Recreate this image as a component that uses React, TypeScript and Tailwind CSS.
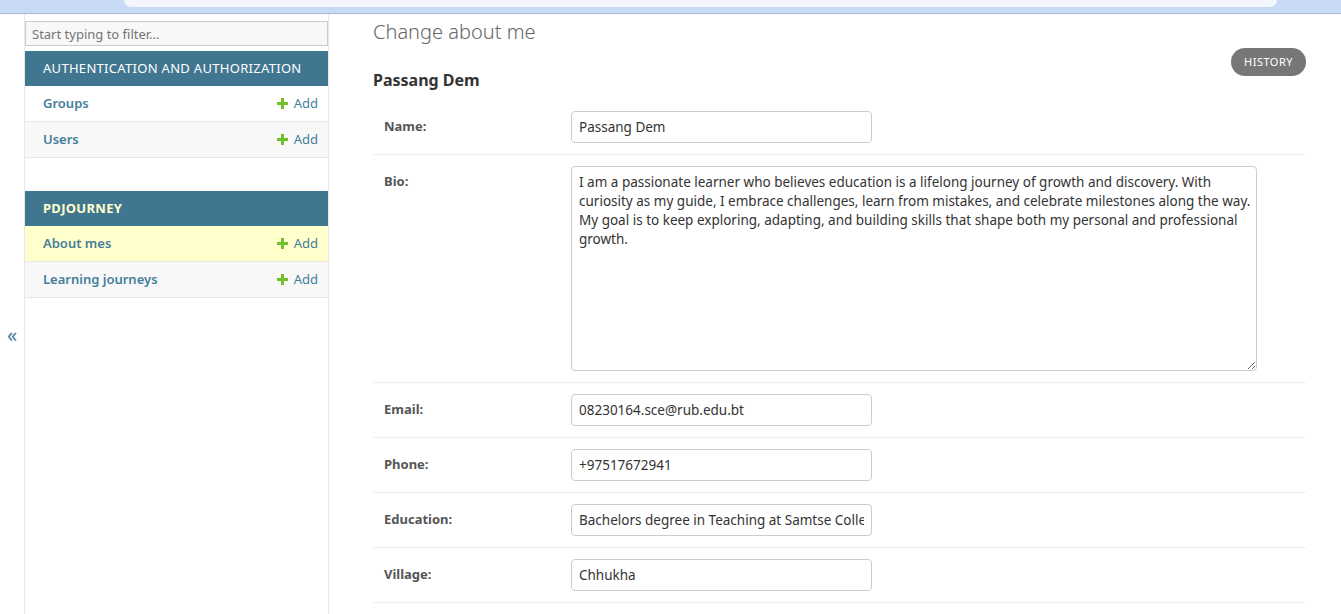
import React from 'react'

const bio =
  'I am a passionate learner who believes education is a lifelong journey of growth and discovery. With\n' +
  'curiosity as my guide, I embrace challenges, learn from mistakes, and celebrate milestones along the way.\n' +
  'My goal is to keep exploring, adapting, and building skills that shape both my personal and professional\n' +
  'growth.'

const PlusIcon = () => (
  <svg width="11" height="11" viewBox="0 0 11 11" className="mr-[6px]">
    <path d="M4 0h3v4h4v3H7v4H4V7H0V4h4z" fill="#70bf2b" />
  </svg>
)

const NavRow = ({ name, current, shaded }: { name: string; current?: boolean; shaded?: boolean }) => (
  <div
    className={`flex h-[36px] items-center justify-between border-b border-[#e8e8e8] pl-[18px] pr-[10px] text-[13px] ${
      current ? 'bg-[#ffffcc]' : shaded ? 'bg-[#f8f8f8]' : 'bg-white'
    }`}
  >
    <a className="font-semibold text-[#447e9b]">{name}</a>
    <a className="flex items-center text-[#447e9b]">
      <PlusIcon />
      Add
    </a>
  </div>
)

const FieldRow = ({ label, value }: { label: string; value: string }) => (
  <div className="flex items-start border-b border-[#eee] py-[11px]">
    <label className="w-[198px] shrink-0 pl-[11px] pt-[7px] text-[13px] font-bold leading-[16px] text-[#555]">{label}</label>
    <input
      defaultValue={value}
      className="h-[32px] w-[301px] rounded-[4px] border border-[#ccc] px-[7px] text-[13.5px] text-[#333] outline-none"
    />
  </div>
)

export default function App() {
  return (
    <div className="min-h-[614px] bg-white font-['Noto_Sans',sans-serif] text-[#333]">
      {/* browser chrome strip */}
      <div className="h-[14px] border-b border-[#a6bad8] bg-[#c9daf5]">
        <div className="ml-[124px] h-[7px] w-[1153px] rounded-b-[8px] bg-[#f3f6fc]"></div>
      </div>

      <div className="flex">
        <div className="flex h-[600px] w-[25px] shrink-0 justify-center border-r border-[#e8e8e8] pt-[309px]">
          <span className="text-[20px] leading-[24px] text-[#447e9b]">«</span>
        </div>

        <nav className="min-h-[600px] w-[304px] shrink-0 border-r border-[#e8e8e8]">
          <input
            placeholder="Start typing to filter..."
            className="mt-[7px] h-[25px] w-full border border-[#ccc] bg-[#f8f8f8] px-[6px] text-[13px] outline-none placeholder:text-[#757575]"
          />
          <div className="mt-[5px]">
            <div className="flex h-[35px] items-center bg-[#417690] pl-[18px] text-[13px] tracking-[0.3px] text-white">
              AUTHENTICATION AND AUTHORIZATION
            </div>
            <NavRow name="Groups" />
            <NavRow name="Users" shaded />
          </div>
          <div className="mt-[33px]">
            <div className="flex h-[35px] items-center bg-[#417690] pl-[18px] text-[13px] font-bold tracking-[0.3px] text-[#ffffcc]">
              PDJOURNEY
            </div>
            <NavRow name="About mes" current />
            <NavRow name="Learning journeys" shaded />
          </div>
        </nav>

        <main className="flex-1 pl-[44px] pr-[35px]">
          <div className="flex items-start justify-between">
            <div>
              <h1 className="pt-[6px] text-[20px] font-light leading-[24px] text-[#666]">Change about me</h1>
              <h2 className="mt-[26px] text-[16px] font-bold leading-[20px] text-[#333]">Passang Dem</h2>
            </div>
            <a className="mt-[34px] flex h-[28px] items-center rounded-full bg-[#777] px-[13px] text-[11px] tracking-[0.5px] text-white">
              HISTORY
            </a>
          </div>

          <div className="mt-[10px]">
            <FieldRow label="Name:" value="Passang Dem" />
            <div className="flex items-start border-b border-[#eee] py-[11px]">
              <label className="w-[198px] shrink-0 pl-[11px] pt-[7px] text-[13px] font-bold leading-[16px] text-[#555]">Bio:</label>
              <textarea
                defaultValue={bio}
                wrap="off"
                className="h-[205px] w-[686px] overflow-hidden rounded-[4px] border border-[#ccc] px-[7px] py-[6px] text-[13.5px] leading-[19px] text-[#333] outline-none"
              />
            </div>
            <FieldRow label="Email:" value="08230164.sce@rub.edu.bt" />
            <FieldRow label="Phone:" value="+97517672941" />
            <FieldRow label="Education:" value="Bachelors degree in Teaching at Samtse College of Education" />
            <FieldRow label="Village:" value="Chhukha" />
          </div>
        </main>
      </div>
    </div>
  )
}
